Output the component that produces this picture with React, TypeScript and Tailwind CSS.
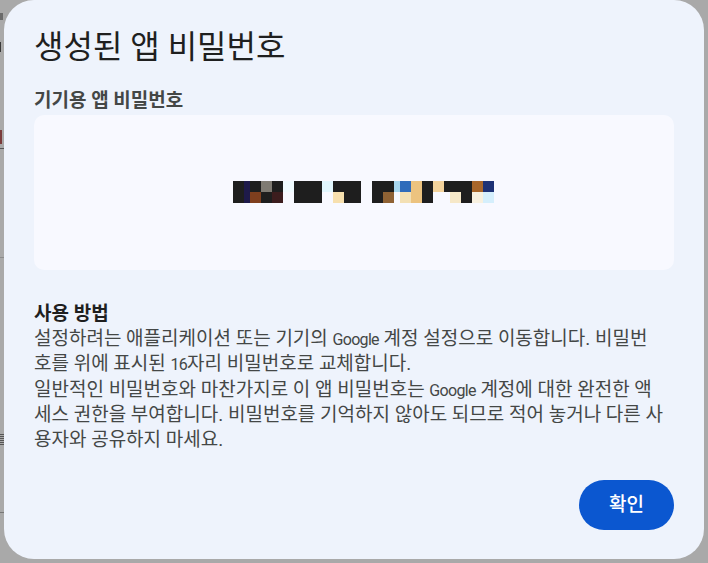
import React from 'react';

const font = { fontFamily: 'Roboto, "Noto Sans CJK KR", sans-serif' };

// blurred password, drawn as pixel blocks [x, y, w, fill]
const blocks: [number, number, number, string][] = [
  [0, 0, 11, '#1e1e1e'], [11, 0, 6, '#1e1a4a'], [17, 0, 11, '#1e1e1e'], [28, 0, 11, '#7f7b73'],
  [39, 0, 11, '#1e1e1e'], [50, 0, 11, '#f0fbff'], [61, 0, 28, '#1e1e1e'], [89, 0, 11, '#e1f6fd'],
  [100, 0, 28, '#1e1e1e'], [139, 0, 22, '#1e1e1e'], [161, 0, 6, '#a8d8f0'], [167, 0, 11, '#2e6bbb'],
  [178, 0, 11, '#ecc37f'], [189, 0, 11, '#1e1e1e'], [200, 0, 11, '#f3d39c'], [211, 0, 28, '#1e1e1e'],
  [239, 0, 11, '#a8662a'], [250, 0, 11, '#1e3275'],
  [0, 11, 11, '#1e1e1e'], [11, 11, 6, '#1e1a4a'], [17, 11, 11, '#7f3f1e'], [28, 11, 11, '#1e1e1e'],
  [39, 11, 11, '#3c1d1e'], [61, 11, 28, '#1e1e1e'], [100, 11, 11, '#f7e0ae'], [111, 11, 17, '#1e1e1e'],
  [139, 11, 11, '#1e1e1e'], [150, 11, 11, '#8f6234'], [167, 11, 11, '#f3e0b4'], [178, 11, 11, '#ecc37f'],
  [189, 11, 11, '#1e1e1e'], [217, 11, 11, '#f6e8c8'], [228, 11, 11, '#1e1e1e'], [239, 11, 11, '#f8f1e0'],
  [250, 11, 11, '#d5effc'],
];

// Latin runs in the reference are narrow next to the hangul
const L = ({ children }: { children: React.ReactNode }) => (
  <span className="text-[16px] tracking-[-0.7px]">{children}</span>
);

const bodyLines: React.ReactNode[] = [
  <>설정하려는 애플리케이션 또는 기기의 <L>Google</L> 계정 설정으로 이동합니다. 비밀번</>,
  <>호를 위에 표시된 <L>16</L>자리 비밀번호로 교체합니다.</>,
  <>일반적인 비밀번호와 마찬가지로 이 앱 비밀번호는 <L>Google</L> 계정에 대한 완전한 액</>,
  <>세스 권한을 부여합니다. 비밀번호를 기억하지 않아도 되므로 적어 놓거나 다른 사</>,
  <>용자와 공유하지 마세요.</>,
];

export default function App() {
  return (
    <div className="w-[708px] h-[563px] bg-[#a9a9a9] flex overflow-hidden" style={font}>
      {/* bits of the page behind the scrim */}
      <div className="w-[4px] flex flex-col">
        <div className="mt-[13px] h-[7px] w-[3px] bg-[#6b6b6b]" />
        <div className="mt-[22px] h-[10px] w-[1px] bg-[#3a3a3a]" />
        <div className="mt-[78px] h-[14px] w-[2px] bg-[#7a3b3b]" />
        <div className="mt-[4px] h-[1px] w-[4px] bg-[#555]" />
        <div className="mt-[108px] h-[1px] w-[4px] bg-[#8c8c8c]" />
        <div className="mt-[176px] h-[12px] w-[4px] bg-[repeating-linear-gradient(#555_0_1px,transparent_1px_2px)]" />
        <div className="mt-[66px] h-[1px] w-[4px] bg-[#777]" />
      </div>
      <div className="w-[700px] h-[559px] rounded-[30px] bg-[#eef3fc] flex flex-col px-[30px] pt-[27px] pb-[29px]">
        <h1 className="text-[32px] leading-[40px] text-[#1f1f1f]">생성된 앱 비밀번호</h1>
        <div className="mt-[22px] text-[19px] leading-[24px] font-bold text-[#444746]">기기용 앱 비밀번호</div>
        <div className="mt-[2px] h-[155px] rounded-[10px] bg-[#f8f9ff] flex items-center justify-center">
          <svg width="261" height="22" viewBox="0 0 261 22" className="mt-[-2px] ml-[19px]">
            {blocks.map(([x, y, w, c], i) => (
              <rect key={i} x={x} y={y} width={w} height={11} fill={c} />
            ))}
          </svg>
        </div>
        <div className="mt-[32px] text-[19px] leading-[24.6px] text-[#444746]">
          <div className="font-bold text-[#1f1f1f]">사용 방법</div>
          {bodyLines.map((l, i) => (
            <div key={i} className="whitespace-nowrap">{l}</div>
          ))}
        </div>
        <div className="mt-auto flex justify-end">
          <button className="h-[50px] w-[95px] rounded-full bg-[#0b57d0] text-white text-[19px] font-medium">
            확인
          </button>
        </div>
      </div>
    </div>
  );
}
